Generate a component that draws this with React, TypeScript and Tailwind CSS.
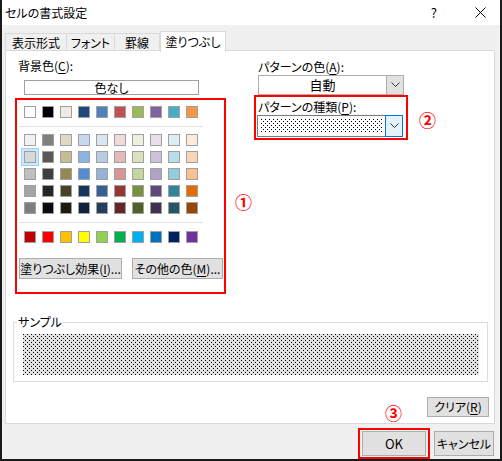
import React from 'react';

// Excel のテーマカラー（Office 2007-2010 テーマ）
const themeTop = ['#ffffff', '#000000', '#eeece1', '#1f497d', '#4f81bd', '#c0504d', '#9bbb59', '#8064a2', '#4bacc6', '#f79646'];
const themeShades = [
  ['#f2f2f2', '#7f7f7f', '#ddd9c3', '#c6d9f0', '#dbe5f1', '#f2dcdb', '#ebf1dd', '#e5e0ec', '#dbeef3', '#fdeada'],
  ['#d8d8d8', '#595959', '#c4bd97', '#8db3e2', '#b8cce4', '#e5b9b7', '#d7e3bc', '#ccc1d9', '#b7dde8', '#fbd5b5'],
  ['#bfbfbf', '#3f3f3f', '#938953', '#548dd4', '#95b3d7', '#d99694', '#c3d69b', '#b2a2c7', '#92cddc', '#fac08f'],
  ['#a5a5a5', '#262626', '#494429', '#17365d', '#366092', '#953734', '#76923c', '#5f497a', '#31859b', '#e36c09'],
  ['#7f7f7f', '#0c0c0c', '#1d1b10', '#0f243e', '#244061', '#632423', '#4f6128', '#3f3151', '#205867', '#974806'],
];
const standard = ['#c00000', '#ff0000', '#ffc000', '#ffff00', '#92d050', '#00b050', '#00b0f0', '#0070c0', '#002060', '#7030a0'];

const Swatch = ({ color, selected = false }: { color: string; selected?: boolean }) => (
  <div
    className={`w-[12px] h-[12px] border border-[#a0a0a0] ${selected ? 'shadow-[0_0_0_2px_#cce8ff,0_0_0_3px_#99d1ff]' : ''}`}
    style={{ backgroundColor: color }}
  />
);

const SwatchRow = ({ colors, selectedIndex = -1 }: { colors: string[]; selectedIndex?: number }) => (
  <div className="flex gap-[6px]">
    {colors.map((c, i) => (
      <Swatch key={i} color={c} selected={i === selectedIndex} />
    ))}
  </div>
);

// 網かけパターン（まばらな点）
const Dots = ({ id, bg }: { id: string; bg: string }) => (
  <svg width="100%" height="100%" className="block" shapeRendering="crispEdges">
    <defs>
      <pattern id={id} width="4" height="4" patternUnits="userSpaceOnUse">
        <rect width="4" height="4" fill={bg} />
        <rect x="0" y="0" width="1" height="1" fill="#000" />
        <rect x="2" y="2" width="1" height="1" fill="#000" />
      </pattern>
    </defs>
    <rect width="100%" height="100%" fill={`url(#${id})`} />
  </svg>
);

const Chevron = () => (
  <svg width="9" height="6" viewBox="0 0 9 6">
    <polyline points="0.5,0.5 4.5,4.5 8.5,0.5" fill="none" stroke="#333" strokeWidth="1" />
  </svg>
);

const Btn = ({ children, className = '' }: { children: React.ReactNode; className?: string }) => (
  <div className={`flex items-center justify-center whitespace-nowrap bg-[#e1e1e1] border border-[#adadad] ${className}`}>
    {children}
  </div>
);

const U = ({ children }: { children: React.ReactNode }) => <span className="underline underline-offset-2">{children}</span>;

const Mark = ({ n, className }: { n: string; className: string }) => (
  <span className={`absolute text-[17px] leading-none font-bold text-[#ff0000] ${className}`}>{n}</span>
);

export default function App() {
  return (
    <div className="w-[502px] h-[461px] bg-[#f0f0f0] border-x-2 border-b-2 border-[#1a1a1a] flex flex-col text-[12px] leading-[16px] text-black whitespace-nowrap [font-feature-settings:'palt'] font-['Noto_Sans_CJK_JP','Noto_Sans',sans-serif]">
      {/* タイトルバー */}
      <div className="h-[25px] shrink-0 bg-white flex items-center pl-[3px]">
        <span>セルの書式設定</span>
        <span className="ml-auto mr-[38px] text-[13px]">?</span>
        <svg width="11" height="11" viewBox="0 0 11 11" className="mr-[14px]">
          <path d="M0.5 0.5 L10.5 10.5 M10.5 0.5 L0.5 10.5" stroke="#000" strokeWidth="1" />
        </svg>
      </div>

      {/* タブ */}
      <div className="mt-[6px] ml-[3px] h-[20px] flex items-end relative z-10">
        <div className="w-[62px] h-[18px] border border-b-0 border-[#d9d9d9] flex items-center justify-center">表示形式</div>
        <div className="w-[48px] h-[18px] border border-l-0 border-b-0 border-[#d9d9d9] flex items-center justify-center">フォント</div>
        <div className="w-[45px] h-[18px] border border-l-0 border-b-0 border-[#d9d9d9] flex items-center justify-center">罫線</div>
        <div className="w-[66px] h-[21px] -mb-px border border-b-0 border-[#d9d9d9] bg-white flex items-center justify-center">塗りつぶし</div>
      </div>

      {/* タブパネル */}
      <div className="ml-[3px] -mt-px w-[490px] h-[374px] shrink-0 bg-white border border-[#d9d9d9] flex flex-col">
        <div className="flex">
          {/* 背景色 */}
          <div className="ml-[9px] flex flex-col">
            <div className="ml-[3px] mt-[7px] h-[16px]">背景色(<U>C</U>):</div>
            <div className="ml-[9px] mt-[6px] w-[175px] h-[15px] border border-[#a0a0a0] flex items-center justify-center leading-[13px]">色なし</div>
            <div className="relative mt-[3px] w-[211px] border-2 border-[#ff0000] pl-[7px] pt-[6px] pb-[13px] flex flex-col">
              <SwatchRow colors={themeTop} />
              <div className="-ml-[5px] mt-[8px] w-[184px] h-px bg-[#e3e3e3]" />
              <div className="mt-[7px] flex flex-col gap-[5px]">
                {themeShades.map((row, i) => (
                  <SwatchRow key={i} colors={row} selectedIndex={i === 1 ? 0 : -1} />
                ))}
              </div>
              <div className="-ml-[5px] mt-[8px] w-[184px] h-px bg-[#e3e3e3]" />
              <div className="mt-[8px]">
                <SwatchRow colors={standard} />
              </div>
              <div className="-ml-[5px] mt-[15px] flex gap-[10px]">
                <Btn className="w-[103px] h-[21px]">塗りつぶし効果(<U>I</U>)...</Btn>
                <Btn className="w-[91px] h-[21px]">その他の色(<U>M</U>)...</Btn>
              </div>
              <Mark n="①" className="left-[218px] top-[93px]" />
            </div>
          </div>

          {/* パターン */}
          <div className="ml-[28px] flex flex-col">
            <div className="ml-[4px] mt-[8px] h-[16px]">パターンの色(<U>A</U>):</div>
            <div className="ml-[4px] w-[146px] h-[20px] border border-[#adadad] flex">
              <div className="flex-1 flex items-center justify-center text-[13px]">自動</div>
              <div className="w-[17px] bg-[#e1e1e1] border-l border-[#adadad] flex items-center justify-center">
                <Chevron />
              </div>
            </div>
            <div className="relative w-[154px] border-2 border-[#ff0000] pt-[2px] pb-[1px] pl-[1px] flex flex-col">
              <div className="ml-[1px] h-[16px]">パターンの種類(<U>P</U>):</div>
              <div className="w-[146px] h-[22px] flex">
                <div className="flex-1 border border-r-0 border-[#7a7a7a] p-[3px]">
                  <Dots id="p1" bg="#ffffff" />
                </div>
                <div className="w-[18px] bg-[#e5f1fb] border border-[#0078d7] flex items-center justify-center">
                  <Chevron />
                </div>
              </div>
              <Mark n="②" className="left-[163px] top-[14px]" />
            </div>
          </div>
        </div>

        {/* サンプル */}
        <fieldset className="ml-[7px] mt-[20px] w-[475px] border border-[#dcdcdc] pb-[6px]">
          <legend className="ml-[3px] px-[1px] leading-[16px]">サンプル</legend>
          <div className="ml-[9px] mt-[4px] w-[456px] h-[41px]">
            <Dots id="p2" bg="#e0e0e0" />
          </div>
        </fieldset>

        <div className="flex justify-end mt-[15px] mr-[5px]">
          <Btn className="w-[62px] h-[20px]">クリア(<U>R</U>)</Btn>
        </div>
      </div>

      {/* ボタン */}
      <div className="flex justify-end items-start mt-[4px] mr-[6px]">
        <div className="relative z-10 border-2 border-[#ff0000] px-[2px] pt-[1px] pb-[1px]">
          <Btn className="w-[64px] h-[25px] text-[13px]">OK</Btn>
          <Mark n="③" className="left-[25px] -top-[26px]" />
        </div>
        <Btn className="ml-[4px] mt-[3px] w-[60px] h-[25px]">キャンセル</Btn>
      </div>
    </div>
  );
}
